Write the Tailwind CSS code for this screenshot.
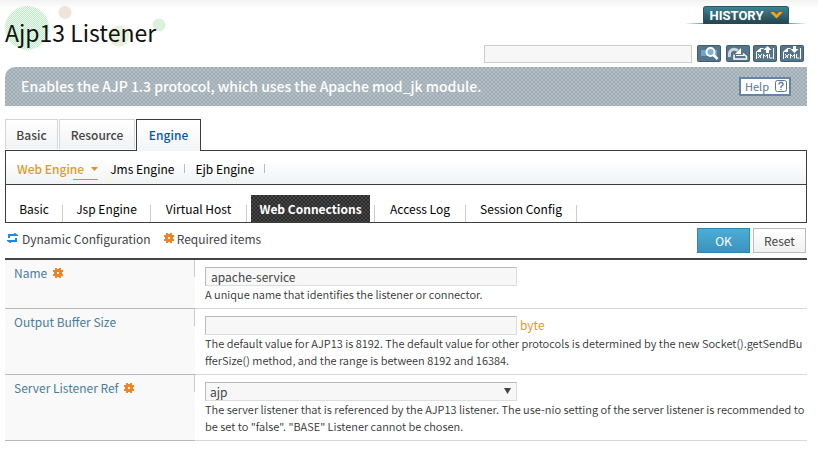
<!DOCTYPE html>
<html lang="en">

<head>
  <meta charset="UTF-8" />
  <meta name="viewport" content="width=device-width, initial-scale=1.0" />
  <title>Ajp13 Listener</title>
  <script src="https://cdn.jsdelivr.net/npm/@tailwindcss/browser@4"></script>
</head>

<body class="bg-white text-[#444] text-[12px] leading-[17px] font-['Noto_Sans_CJK_KR',sans-serif]">

  <!-- Shared icons -->
  <svg class="hidden">
    <symbol id="gear" viewBox="0 0 10 10">
      <path d="M2 0h2v1h2V0h2v2h2v2H9v2h1v2H8v2H6V9H4v1H2V8H0V6h1V4H0V2h2z" fill="#f5811f" />
      <path d="M4 4h2v2H4z" fill="#fff" />
    </symbol>
    <symbol id="xml-file" viewBox="0 0 24 17">
      <path d="M3.500 14V7l4-3.500h3M20.500 3v11" fill="none" stroke="#fff" />
      <path d="M3 7l5-4v4z" fill="#fff" />
      <path d="M5.500 9v1l2 1.500V13M8.500 9v1l-3 2v1M10.500 13.500V9M11 10l1.500 1.500L14 10M14.500 9v4.500M16.500 9v4h3" fill="none" stroke="#fff" />
    </symbol>
  </svg>

  <div class="bg-linear-to-b from-[#f3f3f3] to-white to-[9px] pl-[5px] pr-[11px]">

    <!-- Header -->
    <header class="flex justify-between h-[67px]">
      <div class="relative pt-[14px]">
        <svg class="absolute left-0 top-[6px]" width="164" height="44" viewBox="0 0 164 44">
          <defs>
            <pattern id="dots" width="2" height="2" patternUnits="userSpaceOnUse">
              <path d="M0 0h2v2H0z" fill="#effcf1" />
              <path d="M0 0h1v1H0zM1 1h1v1H1z" fill="#bdedc6" />
            </pattern>
          </defs>
          <circle cx="22" cy="22" r="22" fill="url(#dots)" />
          <circle cx="60" cy="6.500" r="6.500" fill="#f0e4da" />
          <circle cx="114" cy="30" r="10.500" fill="#e9f1dc" />
          <circle cx="154" cy="19" r="6.500" fill="#dcf1dd" />
        </svg>
        <h1 class="relative text-[23px] leading-[36px] text-[#111]">Ajp13 Listener</h1>
      </div>
      <div class="flex flex-col items-end pt-[6px]">
        <div class="flex items-end">
          <span class="w-[18px] h-px bg-linear-to-r from-white to-[#5c9da5]"></span>
          <button class="flex items-center justify-center gap-2 w-[86px] h-[18px] rounded-t-[3px] border border-b-0 border-[#1f5a66] bg-linear-to-b from-[#3d8494] to-[#22444d] text-white text-[13px] leading-[16px] font-bold font-['Roboto',sans-serif]">
            HISTORY
            <svg width="11" height="7" viewBox="0 0 11 7"><path d="M0 0h3l2.500 2.500L8 0h3v1L5.500 6.500 0 1z" fill="#f9a01b" /></svg>
          </button>
          <span class="w-[18px] h-px bg-linear-to-l from-white to-[#5c9da5]"></span>
        </div>
        <div class="flex items-start mt-[21px] pr-[3px]">
          <input type="text" aria-label="Search" class="w-[208px] h-[18px] border border-[#ccc] bg-[#f7f7f7] px-1 mr-[5px]" />
          <button aria-label="Search" class="mr-[5px]">
            <svg class="block" width="24" height="17" viewBox="0 0 24 17">
              <rect x=".5" y=".5" width="23" height="16" rx="1" fill="#54758a" stroke="#3f5c70" />
              <path d="M4 5h16v6H4z" fill="#6ba3cc" />
              <circle cx="13.500" cy="7" r="4" fill="#79b2da" stroke="#fff" stroke-width="2" />
              <path d="M16.500 10l4 4" stroke="#fff" stroke-width="2.500" />
            </svg>
          </button>
          <button aria-label="Reload" class="mr-[3px]">
            <svg class="block" width="24" height="17" viewBox="0 0 24 17">
              <rect x=".5" y=".5" width="23" height="16" rx="1" fill="#54758a" stroke="#3f5c70" />
              <path d="M3.500 12C2.500 5 7 2.500 12 5.500" fill="none" stroke="#ccd6dc" stroke-width="3" />
              <path d="M15 3v6H9z" fill="#fff" />
              <path d="M9 10.500H8V14h12.500v-2.500L17 8.500" fill="none" stroke="#fff" stroke-width="1.500" />
              <path d="M10 10.500h8" stroke="#fff" />
            </svg>
          </button>
          <button aria-label="Export XML" class="mr-[3px]">
            <svg class="block" width="24" height="17" viewBox="0 0 24 17">
              <rect x=".5" y=".5" width="23" height="16" rx="1" fill="#54758a" stroke="#3f5c70" />
              <use href="#xml-file" />
              <path d="M14.500 1l4 4H16v3h-3V5h-2.500z" fill="#fff" />
            </svg>
          </button>
          <button aria-label="Import XML">
            <svg class="block" width="24" height="17" viewBox="0 0 24 17">
              <rect x=".5" y=".5" width="23" height="16" rx="1" fill="#54758a" stroke="#3f5c70" />
              <use href="#xml-file" />
              <path d="M14.500 8l4-4H16V1h-3v3h-2.500z" fill="#fff" />
            </svg>
          </button>
        </div>
      </div>
    </header>

    <!-- Description -->
    <section class="flex items-center justify-between h-[39px] pl-4 pr-4 rounded-tl-[10px] bg-[repeating-conic-gradient(#a1adb6_0_25%,#b3bec5_0_50%)] bg-[length:4px_4px]">
      <p class="text-[14px] font-medium text-white">Enables the AJP 1.3 protocol, which uses the Apache mod_jk module.</p>
      <button class="flex items-center justify-between w-[52px] h-[19px] pl-[4px] pr-[2px] pb-px border-2 border-[#6485a3] bg-white text-[11px] text-[#54779a]">
        Help
        <svg width="12" height="12" viewBox="0 0 12 12" fill="none" stroke="#54779a">
          <rect x=".5" y=".5" width="11" height="11" rx="2" />
          <path d="M4 4.500V3.500L5 2.500h2l1 1v1.500l-2 1.500V8M6 9v1" stroke-width="1.300" />
        </svg>
      </button>
    </section>

    <!-- Main tabs -->
    <nav class="flex items-start gap-px mt-[13px] -mb-px font-medium">
      <a href="#" class="flex items-center justify-center w-[53px] h-[30px] pb-px border border-b-0 border-[#d5d5d5] bg-linear-to-b from-white to-[#f1f2f4]">Basic</a>
      <a href="#" class="flex items-center justify-center w-[76px] h-[30px] pb-px border border-b-0 border-[#d5d5d5] bg-linear-to-b from-white to-[#f1f2f4]">Resource</a>
      <a href="#" class="relative z-10 flex items-center justify-center w-[65px] h-[32px] pb-[3px] border border-b-0 border-[#3d3d3d] bg-linear-to-b from-white to-[#f4f5f7] text-[#0b55a5]">Engine</a>
    </nav>

    <div class="border border-[#3d3d3d] text-black">
      <!-- Engine tabs -->
      <nav class="flex items-center h-[33px] pl-[11px] pt-[2px] bg-linear-to-b from-white from-30% to-[#f1f2f4]">
        <a href="#" class="relative flex items-center gap-[7px] mr-3 font-medium text-[#e09a2b]">
          Web Engine
          <svg width="7" height="4" viewBox="0 0 7 4"><path d="M0 0h7L3.500 4z" fill="#dd921c" /></svg>
          <span class="absolute right-0 -bottom-[3px] w-[25px] h-px bg-[#dd921c]"></span>
        </a>
        <a href="#">Jms Engine</a>
        <span class="w-px h-[9px] mx-[10px] bg-[#bbb]"></span>
        <a href="#">Ejb Engine</a>
        <span class="w-px h-[9px] mx-[10px] bg-[#bbb]"></span>
      </nav>

      <!-- Web engine tabs -->
      <nav class="flex items-end h-[38px] border-t border-[#3d3d3d]">
        <a href="#" class="flex items-center justify-center w-[56px] h-[27px] pb-px">Basic</a>
        <span class="w-px h-[17px] bg-[#ccc]"></span>
        <a href="#" class="flex items-center justify-center w-[87px] h-[27px] pb-px">Jsp Engine</a>
        <span class="w-px h-[17px] bg-[#ccc]"></span>
        <a href="#" class="flex items-center justify-center w-[95px] h-[27px] pb-px">Virtual Host</a>
        <span class="w-px h-[17px] mr-1 bg-[#ccc]"></span>
        <a href="#" class="flex items-center justify-center w-[119px] h-[27px] pb-px bg-[repeating-conic-gradient(#2b2b2b_0_25%,#454545_0_50%)] bg-[length:4px_4px] font-bold text-white">Web Connections</a>
        <span class="w-px h-[17px] ml-1 bg-[#ccc]"></span>
        <a href="#" class="flex items-center justify-center w-[90px] h-[27px] pb-px">Access Log</a>
        <span class="w-px h-[17px] bg-[#ccc]"></span>
        <a href="#" class="flex items-center justify-center w-[110px] h-[27px] pb-px">Session Config</a>
        <span class="w-px h-[17px] bg-[#ccc]"></span>
      </nav>
    </div>

    <form>
      <!-- Legend and actions -->
      <div class="flex items-start justify-between h-[35px] pt-[5px] pr-px">
        <div class="flex items-center h-[20px]">
          <svg class="mx-[2px]" width="11" height="10" viewBox="0 0 11 10" fill="none" stroke="#1b8ae8" stroke-width="2">
            <path d="M2 5V2h6M9 5v3H3" />
            <path d="M7 0h1l3 2v1H7zM4 10H3L0 8V7h4z" stroke="none" fill="#1b8ae8" />
          </svg>
          <span class="ml-[2px]">Dynamic Configuration</span>
          <svg class="ml-[13px] mr-[3px]" width="10" height="10"><use href="#gear" /></svg>
          <span>Required items</span>
        </div>
        <div class="flex gap-[3px]">
          <button type="submit" class="w-[53px] h-[25px] pb-px border border-[#2f86ae] bg-linear-to-b from-[#4badd8] to-[#3c93bd] text-white">OK</button>
          <button type="reset" class="w-[53px] h-[25px] pb-px border border-[#bbb] bg-linear-to-b from-white to-[#f1f1f1]">Reset</button>
        </div>
      </div>

      <!-- Listener settings -->
      <table class="w-full table-fixed border-separate border-spacing-0 border-t-2 border-[#444]">
        <tbody>
          <tr>
            <th class="relative w-[190px] pl-[9px] pt-[4px] text-left align-top font-normal text-[#4a7d9b] bg-[#f9f9f9] border-b border-[#bbb]">
              <label for="name">Name</label>
              <svg class="inline-block ml-[3px] -mt-[3px]" width="10" height="10"><use href="#gear" /></svg>
              <span class="absolute right-0 top-0 w-px h-[17px] bg-[#ccc]"></span>
            </th>
            <td class="pl-[10px] pt-[7px] pb-[5px] align-top border-b border-[#d8d8d8]">
              <input id="name" type="text" value="apache-service" class="block w-[312px] h-[19px] px-[5px] border border-[#ddd] border-t-[#bbb] border-l-[#bbb] bg-[#f7f7f7]" />
              <p class="text-[11px] leading-[17px] font-[350] text-[#333]">A unique name that identifies the listener or connector.</p>
            </td>
          </tr>
          <tr>
            <th class="relative pl-[9px] pt-[4px] text-left align-top font-normal text-[#4a7d9b] bg-[#f9f9f9] border-b border-[#bbb]">
              <label for="buffer">Output Buffer Size</label>
              <span class="absolute right-0 top-0 w-px h-[17px] bg-[#ccc]"></span>
            </th>
            <td class="pl-[10px] pt-[7px] pb-[5px] align-top border-b border-[#d8d8d8]">
              <div class="flex items-center gap-[3px] h-[19px]">
                <input id="buffer" type="text" class="w-[312px] h-[19px] px-[5px] border border-[#ddd] border-t-[#bbb] border-l-[#bbb] bg-[#f7f7f7]" />
                <label for="buffer" class="pb-[3px] text-[#e09a2b]">byte</label>
              </div>
              <p class="text-[11px] leading-[17px] font-[350] text-[#333] whitespace-nowrap">The default value for AJP13 is 8192. The default value for other protocols is determined by the new Socket().getSendBu<br>fferSize() method, and the range is between 8192 and 16384.</p>
            </td>
          </tr>
          <tr>
            <th class="relative pl-[9px] pt-[4px] text-left align-top font-normal text-[#4a7d9b] bg-[#f9f9f9] border-b border-[#bbb]">
              <label for="ref">Server Listener Ref</label>
              <svg class="inline-block ml-[3px] -mt-[3px]" width="10" height="10"><use href="#gear" /></svg>
              <span class="absolute right-0 top-0 w-px h-[17px] bg-[#ccc]"></span>
            </th>
            <td class="pl-[10px] pt-[7px] pb-[5px] align-top border-b border-[#d8d8d8]">
              <div class="relative w-[312px]">
                <select id="ref" class="block appearance-none w-full h-[19px] px-1 border border-[#ddd] border-t-[#bbb] border-l-[#bbb] bg-[#f7f7f7] leading-[17px]">
                  <option>ajp</option>
                </select>
                <svg class="absolute right-[6px] top-[6px] pointer-events-none" width="7" height="6" viewBox="0 0 7 6"><path d="M0 0h7L3.500 6z" fill="#444" /></svg>
              </div>
              <p class="text-[11px] leading-[17px] font-[350] text-[#333] whitespace-nowrap">The server listener that is referenced by the AJP13 listener. The use-nio setting of the server listener is recommended to<br>be set to "false". "BASE" Listener cannot be chosen.</p>
            </td>
          </tr>
        </tbody>
      </table>
    </form>
  </div>

</body>

</html>
